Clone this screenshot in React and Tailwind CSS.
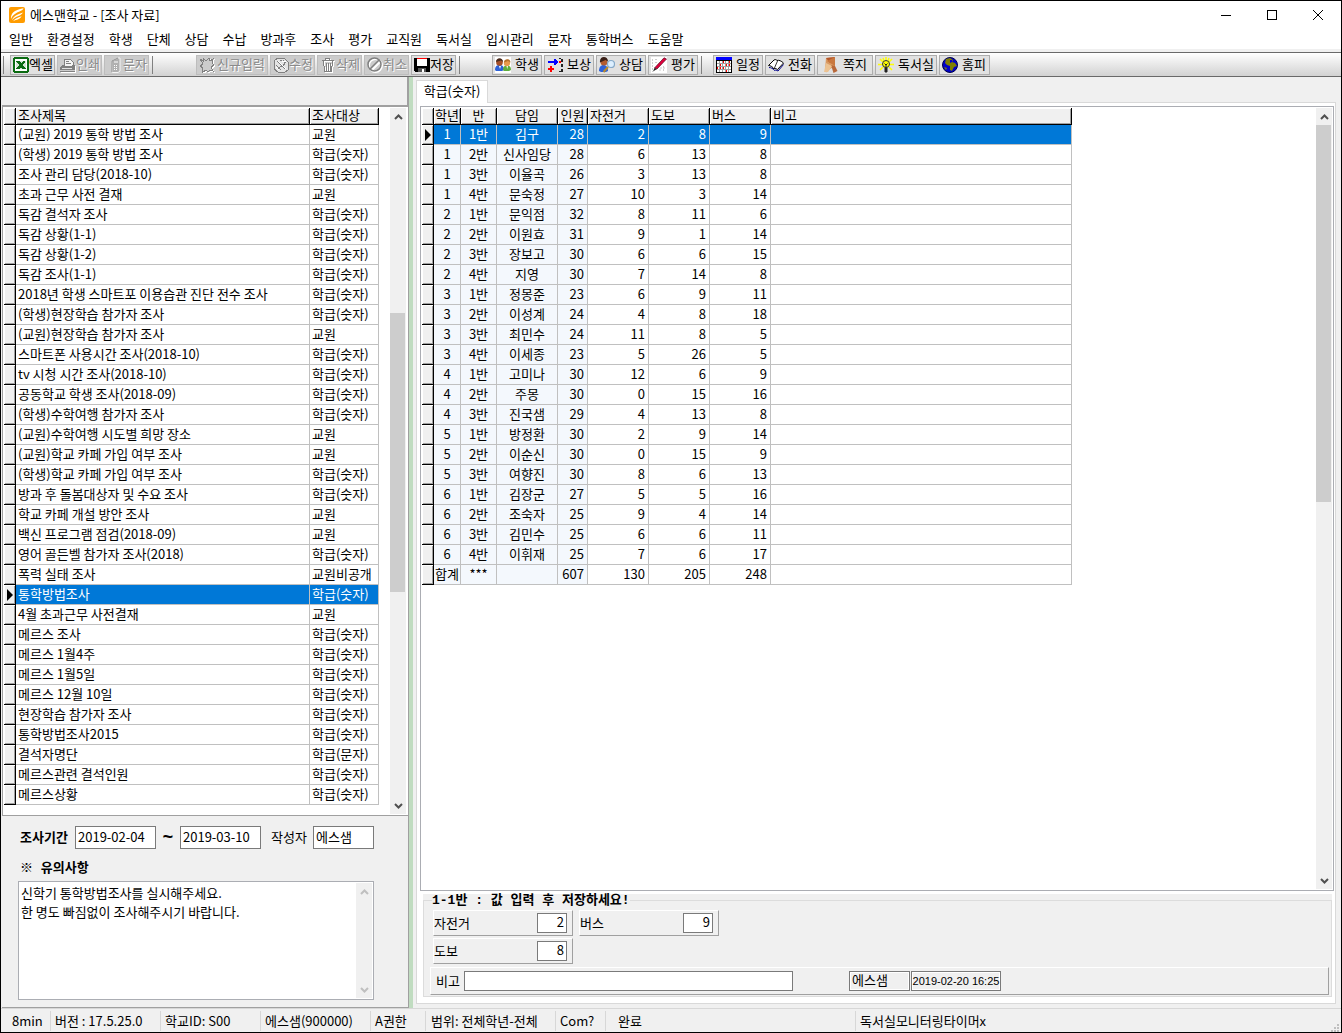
import { useState } from 'react';

const MENUS = ['일반', '환경설정', '학생', '단체', '상담', '수납', '방과후', '조사', '평가', '교직원', '독서실', '입시관리', '문자', '통학버스', '도움말'];

const NUM = '학급(숫자)';
const SURVEYS = [
  ['(교원) 2019 통학 방법 조사', '교원'],
  ['(학생) 2019 통학 방법 조사', NUM],
  ['조사 관리 담당(2018-10)', NUM],
  ['초과 근무 사전 결재', '교원'],
  ['독감 결석자 조사', NUM],
  ['독감 상황(1-1)', NUM],
  ['독감 상황(1-2)', NUM],
  ['독감 조사(1-1)', NUM],
  ['2018년 학생 스마트포 이용습관 진단 전수 조사', NUM],
  ['(학생)현장학습 참가자 조사', NUM],
  ['(교원)현장학습 참가자 조사', '교원'],
  ['스마트폰 사용시간 조사(2018-10)', NUM],
  ['tv 시청 시간 조사(2018-10)', NUM],
  ['공동학교 학생 조사(2018-09)', NUM],
  ['(학생)수학여행 참가자 조사', NUM],
  ['(교원)수학여행 시도별 희망 장소', '교원'],
  ['(교원)학교 카페 가입 여부 조사', '교원'],
  ['(학생)학교 카페 가입 여부 조사', NUM],
  ['방과 후 돌봄대상자 및 수요 조사', NUM],
  ['학교 카페 개설 방안 조사', '교원'],
  ['백신 프로그램 점검(2018-09)', '교원'],
  ['영어 골든벨 참가자 조사(2018)', NUM],
  ['폭력 실태 조사', '교원비공개'],
  ['통학방법조사', NUM],
  ['4월 초과근무 사전결재', '교원'],
  ['메르스 조사', NUM],
  ['메르스 1월4주', NUM],
  ['메르스 1월5일', NUM],
  ['메르스 12월 10일', NUM],
  ['현장학습 참가자 조사', NUM],
  ['통학방법조사2015', NUM],
  ['결석자명단', '학급(문자)'],
  ['메르스관련 결석인원', NUM],
  ['메르스상황', NUM],
];

const CLASSES = [
  ['1', '1반', '김구', 28, 2, 8, 9],
  ['1', '2반', '신사임당', 28, 6, 13, 8],
  ['1', '3반', '이율곡', 26, 3, 13, 8],
  ['1', '4반', '문숙정', 27, 10, 3, 14],
  ['2', '1반', '문익점', 32, 8, 11, 6],
  ['2', '2반', '이원효', 31, 9, 1, 14],
  ['2', '3반', '장보고', 30, 6, 6, 15],
  ['2', '4반', '지영', 30, 7, 14, 8],
  ['3', '1반', '정몽준', 23, 6, 9, 11],
  ['3', '2반', '이성계', 24, 4, 8, 18],
  ['3', '3반', '최민수', 24, 11, 8, 5],
  ['3', '4반', '이세종', 23, 5, 26, 5],
  ['4', '1반', '고미나', 30, 12, 6, 9],
  ['4', '2반', '주몽', 30, 0, 15, 16],
  ['4', '3반', '진국샘', 29, 4, 13, 8],
  ['5', '1반', '방정환', 30, 2, 9, 14],
  ['5', '2반', '이순신', 30, 0, 15, 9],
  ['5', '3반', '여향진', 30, 8, 6, 13],
  ['6', '1반', '김장군', 27, 5, 5, 16],
  ['6', '2반', '조숙자', 25, 9, 4, 14],
  ['6', '3반', '김민수', 25, 6, 6, 11],
  ['6', '4반', '이휘재', 25, 7, 6, 17],
  ['합계', '***', '', 607, 130, 205, 248],
];

const CLASS_COLS = [
  { label: '학년', width: 27, align: 'center' },
  { label: '반', width: 36, align: 'center' },
  { label: '담임', width: 61, align: 'center' },
  { label: '인원', width: 30, align: 'right' },
  { label: '자전거', width: 61, align: 'right' },
  { label: '도보', width: 61, align: 'right' },
  { label: '버스', width: 61, align: 'right' },
  { label: '비고', width: 301, align: 'left' },
];

/* ---------- icons ---------- */

function Icon({ children, crisp }) {
  return (
    <svg viewBox="0 0 16 16" className="h-4 w-4 shrink-0" shapeRendering={crisp ? 'crispEdges' : 'auto'} aria-hidden="true">
      {children}
    </svg>
  );
}

const AppLogo = () => (
  <Icon>
    <rect width="16" height="16" rx="2" fill="#ff9c00" />
    <path d="M2 12C1.600 7 4.500 3 14.500 1.300C13.500 4 10 4.300 7 6.300C4.300 8 3 9.500 2 12Z" fill="#fff" />
    <path d="M3 13.200C4.500 9 8 7.500 14 5.400C12.600 8 10 8.500 7.500 9.700C5.500 10.700 4.400 11.700 3 13.200Z" fill="#fff" />
    <path d="M4 14.300C6 11.600 8.500 10.800 12.600 9.300C11 12.400 8 12.400 4 14.300Z" fill="#fff" />
  </Icon>
);

const ExcelIcon = () => (
  <Icon crisp>
    <path d="M1 0h14v1h1v14h-1v1H1v-1H0V1h1Z" fill="#0b6b12" />
    <rect x="2" y="2" width="12" height="12" fill="#fff" />
    <rect x="3" y="4" width="10" height="8" fill="#d5e4d5" />
    <path d="M3 4h4l1 2 2-2h2v1l-2 3 3 4H9L8 10l-2 2H3l3-4Z" fill="#0b6b12" />
  </Icon>
);

const PrintIcon = () => (
  <Icon crisp>
    <path d="M4 9V2h6l3 3v4Z" fill="#f4f4f4" stroke="#808080" />
    <path d="M6 4.500h3M6 6.500h5" stroke="#808080" />
    <path d="M2 8h2v2h8V8h3v5H0v-3Z" fill="#808080" />
    <path d="M1 15.500h15M15.500 9v6" stroke="#fff" />
    <path d="M0 14h15" stroke="#808080" />
    <path d="M2 11.500h10" stroke="#e0e0e0" />
  </Icon>
);

const PhoneIcon = () => (
  <Icon>
    <path d="M5 4l6-3h2v13l-2 1.500H5.500Z" fill="#b0b0b0" stroke="#f4f4f4" />
    <path d="M5 4l6-3M5 4v11" stroke="#8a8a8a" fill="none" />
    <path d="M7 5h4M7 8.500h1M9 8.500h1M7 10.500h1M9 10.500h1M7 12.500h1M9 12.500h1" stroke="#fff" />
  </Icon>
);

const NewIcon = () => (
  <Icon crisp>
    <path d="M1 2l3 2V1l3 3 3-3 1 3 3-2-1 4 2 2-3 2 2 4-3-1-2 2-2-2-4 3 1-5-3-2 3-2Z" fill="none" stroke="#fff" transform="translate(1 1)" />
    <path d="M1 2l3 2V1l3 3 3-3 1 3 3-2-1 4 2 2-3 2 2 4-3-1-2 2-2-2-4 3 1-5-3-2 3-2Z" fill="#ccc" stroke="#808080" />
  </Icon>
);

const EditIcon = () => (
  <Icon crisp>
    <path d="M1 4l4-3h6l4 4v8l-3 2H5l-4-3Z" fill="#e4e4e4" stroke="#808080" />
    <path d="M4 4l8 8M7 3l6 3M3 8l5 5M10 3l2 4M4 12l8-5" stroke="#808080" />
    <path d="M5 4l8 8M3 10l3 3M9 4l4 1" stroke="#fff" />
  </Icon>
);

const TrashIcon = () => (
  <Icon crisp>
    <path d="M3 4.500h12M6.500 4V2.500h4V4M4.500 5l1 10.500h7l1-10.500M7.500 7v7M9.500 7v7M11.500 7v7" fill="none" stroke="#fff" />
    <path d="M2 3.500h12M5.500 3V1.500h4V3M3.500 4l1 10.500h7l1-10.500M6.500 6v8M8.500 6v8M10.500 6v8" fill="none" stroke="#808080" />
  </Icon>
);

const CancelIcon = () => (
  <Icon>
    <circle cx="8.500" cy="8.500" r="6.500" fill="none" stroke="#fff" strokeWidth="2" />
    <path d="M4.500 13.500l9-9" stroke="#fff" strokeWidth="2" />
    <circle cx="7.500" cy="7.500" r="6.500" fill="none" stroke="#808080" strokeWidth="1.500" />
    <path d="M3 12l9-9" stroke="#808080" strokeWidth="1.500" />
  </Icon>
);

const SaveIcon = () => (
  <Icon crisp>
    <path d="M0 1h16v14H1l-1-1Z" fill="#000" />
    <rect x="3" y="1" width="10" height="8" fill="#fff" />
    <rect x="3" y="1" width="10" height="1" fill="#f00" />
    <rect x="4" y="11" width="8" height="4" fill="#555" />
    <rect x="8" y="12" width="2" height="3" fill="#fff" />
  </Icon>
);

const StudentIcon = () => (
  <Icon>
    <rect width="16" height="16" fill="#fff" />
    <path d="M0 13c0-4 2-5 4.500-5S9 9 9 13L7 14H1Z" fill="#2d62d8" />
    <path d="M8 13c0-3.500 1.500-4.500 4-4.500s4 1 4 4.500l-2 1H9Z" fill="#5fae3d" />
    <circle cx="4.500" cy="5.500" r="3.300" fill="#a6512a" />
    <circle cx="12" cy="6" r="3.200" fill="#e89a4c" />
    <path d="M1 5c0-5 7-5 7 0L6 3.500Z" fill="#4a2a1c" />
    <path d="M9 5.500c0-4.500 6.500-4.500 6.500 0L13 4Z" fill="#b5702a" />
    <path d="M4 9l1 3 1-3ZM11.500 9l.7 3 .8-3Z" fill="#fff" />
  </Icon>
);

const MeritIcon = () => (
  <Icon crisp>
    <path d="M1 4h6V2h1l3 3-3 3H7V6H1Z" fill="#00f" />
    <path d="M3 9h2v2h2v2H5v2H3v-2H1v-2h2Z" fill="#f00" />
    <path d="M12 1h2v1h-2zM14 2h2v3h-2zM14 7h2v3h-2zM14 12h2v3h-2zM12 14h2v1h-2z" fill="#222" />
    <rect x="12" y="4" width="2" height="2" fill="#f00" />
  </Icon>
);

const CounselIcon = () => (
  <Icon>
    <path d="M0 14c0-4 2-6 4.500-6S9 10 9 14l-2 1H2Z" fill="#2d62d8" />
    <circle cx="5" cy="5" r="3.500" fill="#b35c30" />
    <path d="M1 5.500c-1-7 8-7 8-1L6.500 3Z" fill="#3a2018" />
    <path d="M9 10l-4.500 5" stroke="#b98a2c" strokeWidth="2" />
    <circle cx="12" cy="7" r="3.500" fill="#dcefff" stroke="#86a9c8" strokeWidth="1.200" />
  </Icon>
);

const GradeIcon = () => (
  <Icon>
    <rect width="16" height="16" fill="#fff" />
    <path d="M1.500 2v13M4 2.500h3M4 5.500h2M9 11h5M12.500 9v6M8 13h3" stroke="#ccc" strokeDasharray="2 1" />
    <path d="M3.500 11L13 .8 15.500 2 6 12Z" fill="#e0003c" stroke="#5a0a22" strokeWidth=".7" />
    <path d="M3.500 11L2 14.500 6 12Z" fill="#222" />
  </Icon>
);

const CalendarIcon = () => (
  <Icon crisp>
    <rect width="16" height="16" fill="#000" />
    <rect x="1" y="4" width="14" height="11" fill="#fff" />
    <rect y="0" width="16" height="3" fill="#00f" />
    <path d="M1 6.500h14M1 9.500h14M1 12.500h14M3.500 4v11M6.500 4v11M9.500 4v11M12.500 4v11" stroke="#a0a0a0" />
    <path d="M4 8h1M10 8h1M4 11h1M7 11h1M7 5h1M13 5h1M10 14h1M13 8h1M1 11h1" stroke="#f00" strokeWidth="2" />
  </Icon>
);

const BookIcon = () => (
  <Icon>
    <path d="M0.500 8.500L6 3c1.500-1 2.500 0 3 .5 1.500-.8 4.500.5 6.500 2.500L9.500 12.500c-2-1.500-3-1-3.500-.5-1-2-3.500-3.500-5.500-3.500Z" fill="#fff" stroke="#000" />
    <path d="M6 12L9.500 4" stroke="#000" strokeWidth=".8" />
    <path d="M1 10.500c2 0 4 1 5.500 3 1-.7 2-.3 3.500.5l5.500-6.500" stroke="#00008b" fill="none" />
  </Icon>
);

const NoteIcon = () => (
  <Icon>
    <path d="M3 1l9-1v9l-5 3-4 3.500-1-3Z" fill="#d99a63" />
    <path d="M3 1l9-1L7 6Z" fill="#b5562b" />
    <path d="M12 0v9L4 4Z" fill="#c9783f" />
    <path d="M8 8l4 1 2.500 5-4 2Z" fill="#b8683a" />
    <path d="M1 15l2-9 6 3-4 6Z" fill="#ecc291" />
  </Icon>
);

const BulbIcon = () => (
  <Icon>
    <path d="M8 0v3M2 2l3 3M14 2l-3 3M0 7.500h4M12 7.500h4M2 13l3-3M14 13l-3-3M5 1l1 3M11 1l-1 3" stroke="#ff0" strokeWidth="1.500" />
    <circle cx="8" cy="7" r="3.500" fill="#ff0" stroke="#333" />
    <path d="M6.500 6.500L8 8l1.500-1.500M8 8v4" stroke="#222" fill="none" />
    <path d="M6.500 10.500h3v4L8 16l-1.500-1.500Z" fill="#222" />
  </Icon>
);

const GlobeIcon = () => (
  <Icon>
    <circle cx="8" cy="8" r="7.500" fill="#0000c8" stroke="#00004a" />
    <path d="M4 2l4-1 3 2-1 2 3 1 2 3-3 1-2 4-2-1V9L5 8 3 6Z" fill="#7f7f00" />
    <path d="M8 3h2v2L8 6Z" fill="#0000c8" />
    <path d="M2 10l3 1-1 2Z" fill="#7f7f00" />
  </Icon>
);

/* ---------- window parts ---------- */

function TitleBar() {
  return (
    <header className="flex h-7 items-center bg-white pl-2">
      <AppLogo />
      <h1 className="ml-[5px] flex-1 text-[13px] leading-5">에스맨학교 - [조사 자료]</h1>
      <button type="button" aria-label="최소화" className="grid h-7 w-[46px] place-items-center">
        <svg viewBox="0 0 10 10" className="h-[10px] w-[10px]"><path d="M0 5.500h10" stroke="#000" /></svg>
      </button>
      <button type="button" aria-label="최대화" className="grid h-7 w-[46px] place-items-center">
        <svg viewBox="0 0 10 10" className="h-[10px] w-[10px]"><rect x=".5" y=".5" width="9" height="9" fill="none" stroke="#000" /></svg>
      </button>
      <button type="button" aria-label="닫기" className="grid h-7 w-[46px] place-items-center">
        <svg viewBox="0 0 10 10" className="h-[10px] w-[10px]"><path d="M0 0l10 10M10 0L0 10" stroke="#000" /></svg>
      </button>
    </header>
  );
}

function MenuBar() {
  return (
    <nav className="flex h-5 items-center gap-[14px] bg-white pl-2 whitespace-nowrap">
      {MENUS.map(m => (
        <button key={m} type="button" className="leading-5">{m}</button>
      ))}
    </nav>
  );
}

function ToolButton({ icon, label, className, disabled }) {
  return (
    <button
      type="button"
      disabled={disabled}
      className={`flex h-5 shrink-0 items-center border pl-[2px] whitespace-nowrap ${disabled
        ? 'border-[#bdbdbd] bg-[#cccccc] text-[#8a8a8a] [text-shadow:1px_1px_0_#fff]'
        : 'border-[#adadad] bg-[#e1e1e1]'} ${className}`}
    >
      {icon}
      <span className="pb-[2px]">{label}</span>
    </button>
  );
}

const Divider = ({ className }) => <span className={`h-[18px] w-px shrink-0 bg-[#808080] ${className}`} />;

function Toolbar() {
  return (
    <div className="flex h-[25px] items-center gap-[2px] border-y border-[#696969] bg-linear-to-b from-white to-[#d2d2d2] pl-[2px] leading-4">
      <Divider className="mr-[4px]" />
      <ToolButton icon={<ExcelIcon />} label="엑셀" className="w-[45px]" />
      <ToolButton icon={<PrintIcon />} label="인쇄" className="w-[45px]" disabled />
      <ToolButton icon={<PhoneIcon />} label="문자" className="w-[45px]" disabled />
      <Divider className="mr-[41px] ml-[1px]" />
      <ToolButton icon={<NewIcon />} label="신규입력" className="w-[72px] gap-[2px]" disabled />
      <ToolButton icon={<EditIcon />} label="수정" className="w-[45px]" disabled />
      <ToolButton icon={<TrashIcon />} label="삭제" className="w-[45px]" disabled />
      <ToolButton icon={<CancelIcon />} label="취소" className="w-[45px]" disabled />
      <ToolButton icon={<SaveIcon />} label="저장" className="w-[45px]" />
      <Divider className="mr-[30px] ml-[1px]" />
      <ToolButton icon={<StudentIcon />} label="학생" className="w-[50px] gap-1" />
      <ToolButton icon={<MeritIcon />} label="보상" className="w-[50px] gap-1" />
      <ToolButton icon={<CounselIcon />} label="상담" className="w-[50px] gap-1" />
      <ToolButton icon={<GradeIcon />} label="평가" className="w-[50px] gap-1" />
      <Divider className="mr-[9px] ml-[1px]" />
      <ToolButton icon={<CalendarIcon />} label="일정" className="w-[50px] gap-1" />
      <ToolButton icon={<BookIcon />} label="전화" className="w-[50px] gap-1" />
      <ToolButton icon={<NoteIcon />} label="쪽지" className="w-[56px] gap-1 pl-[5px]" />
      <ToolButton icon={<BulbIcon />} label="독서실" className="w-[62px] gap-1" />
      <ToolButton icon={<GlobeIcon />} label="홈피" className="w-[51px] gap-1" />
    </div>
  );
}

function ScrollBar({ faint, before, thumb, after }) {
  const color = faint ? '#bfbfbf' : '#505050';
  return (
    <div className="flex w-4 shrink-0 flex-col bg-[#f0f0f0]">
      <button type="button" aria-label="위로" className="grid h-[17px] w-4 shrink-0 place-items-center">
        <svg viewBox="0 0 9 6" className="h-[6px] w-[9px]"><path d="M1 5l3.500-3.500L8 5" fill="none" stroke={color} strokeWidth="2" /></svg>
      </button>
      <div className="flex flex-1 flex-col">
        <div style={{ flexGrow: before }} />
        <div className="mr-px bg-[#cdcdcd]" style={{ flexGrow: thumb }} />
        <div style={{ flexGrow: after }} />
      </div>
      <button type="button" aria-label="아래로" className="grid h-[17px] w-4 shrink-0 place-items-center">
        <svg viewBox="0 0 9 6" className="h-[6px] w-[9px]"><path d="M1 1l3.500 3.500L8 1" fill="none" stroke={color} strokeWidth="2" /></svg>
      </button>
    </div>
  );
}

function HeadCell({ children, center }) {
  return (
    <th className={`h-[17px] border-r border-b border-black bg-[#f0f0f0] pt-0 pb-[2px] leading-[14px] font-normal whitespace-nowrap shadow-[inset_1px_1px_0_#fff,inset_-1px_-1px_0_#a0a0a0] ${center ? 'px-0 text-center' : 'px-[2px] text-left'}`}>
      {children}
    </th>
  );
}

function Indicator({ active }) {
  return (
    <td className="h-5 border-r border-b border-black bg-[#f0f0f0] p-0 pl-[3px] shadow-[inset_1px_1px_0_#fff,inset_-1px_-1px_0_#a0a0a0]">
      {active && (
        <svg viewBox="0 0 6 12" className="h-3 w-[6px]"><path d="M0 0l6 6-6 6Z" fill="#000" /></svg>
      )}
    </td>
  );
}

function SurveyTable() {
  const [selected, setSelected] = useState(23);
  return (
    <table className="w-[375px] table-fixed border-separate border-spacing-0">
      <colgroup>
        <col className="w-[12px]" />
        <col className="w-[294px]" />
        <col className="w-[69px]" />
      </colgroup>
      <thead>
        <tr>
          <HeadCell />
          <HeadCell>조사제목</HeadCell>
          <HeadCell>조사대상</HeadCell>
        </tr>
      </thead>
      <tbody>
        {SURVEYS.map(([title, target], i) => (
          <tr key={title} onClick={() => setSelected(i)} className={i === selected ? 'bg-[#0078d7] text-white' : ''}>
            <Indicator active={i === selected} />
            <td className="h-5 border-r border-b border-[#c0c0c0] px-[2px] pt-0 pb-[2px] leading-[17px] whitespace-nowrap">{title}</td>
            <td className="h-5 border-r border-b border-[#c0c0c0] px-[2px] pt-0 pb-[2px] leading-[17px] whitespace-nowrap">{target}</td>
          </tr>
        ))}
      </tbody>
    </table>
  );
}

function ClassTable() {
  const [selected, setSelected] = useState(0);
  return (
    <table className="w-[650px] table-fixed border-separate border-spacing-0">
      <colgroup>
        <col className="w-[12px]" />
        {CLASS_COLS.map(c => <col key={c.label} style={{ width: c.width }} />)}
      </colgroup>
      <thead>
        <tr>
          <HeadCell />
          {CLASS_COLS.map((c, i) => <HeadCell key={c.label} center={i < 4}>{c.label}</HeadCell>)}
        </tr>
      </thead>
      <tbody>
        {CLASSES.map((row, r) => (
          <tr key={r} onClick={() => setSelected(r)} className={r === selected ? 'bg-[#0078d7] text-white' : ''}>
            <Indicator active={r === selected} />
            {CLASS_COLS.map((c, i) => (
              <td
                key={c.label}
                className={`h-5 border-r border-b border-[#c0c0c0] pt-0 pb-[2px] leading-[17px] whitespace-nowrap ${i < 4 && r !== selected ? 'bg-[#f4f8fd]' : ''} ${c.align === 'right' ? 'pr-[3px] pl-0 text-right' : 'px-0 text-center'}`}
              >
                {row[i]}
              </td>
            ))}
          </tr>
        ))}
      </tbody>
    </table>
  );
}

function SurveyDetail() {
  return (
    <section className="border-r border-b border-[#a0a0a0] px-4 pt-[10px] pb-[7px]">
      <div className="flex h-[23px] items-center pl-[2px]">
        <label htmlFor="from" className="w-[55px] pb-[2px] font-bold">조사기간</label>
        <input id="from" defaultValue="2019-02-04" className="h-[23px] w-[81px] border border-[#7a7a7a] bg-white px-[2px] pb-[3px]" />
        <span className="w-6 text-center font-['Liberation_Mono',monospace] text-[18px] font-bold">~</span>
        <input aria-label="종료일" defaultValue="2019-03-10" className="h-[23px] w-[81px] border border-[#7a7a7a] bg-white px-[2px] pb-[3px]" />
        <label htmlFor="writer" className="ml-[10px] w-[42px] pb-[2px]">작성자</label>
        <input id="writer" defaultValue="에스샘" className="h-[23px] w-[61px] border border-[#7a7a7a] bg-white px-[2px] pb-[3px]" />
      </div>
      <label htmlFor="notice" className="mt-[10px] mb-[2px] block pl-[2px] font-['Liberation_Mono','Noto_Sans_CJK_KR',monospace] leading-5 font-bold">※ 유의사항</label>
      <div className="flex h-[119px] w-[356px] border border-[#abadb3] bg-white p-px">
        <textarea
          id="notice"
          className="flex-1 resize-none overflow-hidden bg-white pl-px leading-[19px]"
          defaultValue={'신학기 통학방법조사를 실시해주세요.\n한 명도 빠짐없이 조사해주시기 바랍니다.'}
        />
        <ScrollBar faint before={1} thumb={0} after={0} />
      </div>
    </section>
  );
}

function ValueField({ label, value }) {
  return (
    <label className="flex h-[26px] w-[140px] items-center justify-between border border-t-white border-r-[#a0a0a0] border-b-[#a0a0a0] border-l-white pr-[5px]">
      {label}
      <input defaultValue={value} className="h-5 w-[30px] border border-[#7a7a7a] bg-white px-[2px] pb-[2px] text-right" />
    </label>
  );
}

function EntryForm() {
  return (
    <div className="mt-[3px] mr-[3px] ml-[6px] bg-[#f0f0f0]">
      <fieldset className="border border-[#dcdcdc] pr-[2px] pb-px pl-[6px]">
        <legend className="ml-[2px] h-[13px] bg-[#f0f0f0] font-['Liberation_Mono','Noto_Sans_CJK_KR',monospace] leading-[13px] font-bold whitespace-nowrap">
          1-1반 : 값 입력 후 저장하세요!
        </legend>
        <div className="mt-[3px] ml-[3px] grid grid-cols-[140px_140px] gap-x-[6px] gap-y-[2px]">
          <ValueField label="자전거" value="2" />
          <ValueField label="버스" value="9" />
          <ValueField label="도보" value="8" />
        </div>
        <div className="mt-[3px] flex h-7 items-center border border-t-white border-r-[#a0a0a0] border-b-[#a0a0a0] border-l-white pl-[5px]">
          <label htmlFor="remark" className="w-7">비고</label>
          <input id="remark" className="h-5 w-[329px] border border-[#7a7a7a] bg-white px-[2px]" />
          <input aria-label="입력자" readOnly defaultValue="에스샘" className="ml-[56px] h-5 w-[61px] border border-[#7a7a7a] bg-[#f0f0f0] px-[2px] pb-[2px] shadow-[inset_0_0_0_1px_#fff]" />
          <input aria-label="입력시각" readOnly defaultValue="2019-02-20 16:25" className="ml-px h-5 w-[90px] border border-[#7a7a7a] bg-[#f0f0f0] px-0 text-center font-['Liberation_Sans',sans-serif] text-[11px] shadow-[inset_0_0_0_1px_#fff]" />
        </div>
      </fieldset>
    </div>
  );
}

function StatusBar() {
  return (
    <footer className="flex h-6 items-center border-t border-[#d7d7d7] bg-[#f0f0f0] whitespace-nowrap">
      <span className="w-[50px] border-r border-[#d7d7d7] pl-[11px]">8min</span>
      <span className="w-[110px] border-r border-[#d7d7d7] pl-1">버전 : 17.5.25.0</span>
      <span className="w-[100px] border-r border-[#d7d7d7] pl-1">학교ID: S00</span>
      <span className="w-[110px] border-r border-[#d7d7d7] pl-1">에스샘(900000)</span>
      <span className="w-[55px] border-r border-[#d7d7d7] pl-1">A권한</span>
      <span className="w-[130px] border-r border-[#d7d7d7] pl-[5px]">범위: 전체학년-전체</span>
      <span className="w-[50px] border-r border-[#d7d7d7] pl-1">Com?</span>
      <span className="w-[250px] border-r border-[#d7d7d7] pl-3">완료</span>
      <span className="flex-1 pl-1">독서실모니터링타이머x</span>
      <svg viewBox="0 0 8 8" className="mr-[2px] h-2 w-2 self-end" aria-hidden="true">
        <path d="M6 0h2v2H6zM3 3h2v2H3zM6 3h2v2H6zM0 6h2v2H0zM3 6h2v2H3zM6 6h2v2H6z" fill="#bfbfbf" />
      </svg>
    </footer>
  );
}

export default function App() {
  return (
    <div className="flex min-h-screen flex-col border border-black bg-[#f0f0f0] font-['Noto_Sans_CJK_KR',sans-serif] text-[13px] leading-5 text-black">
      <TitleBar />
      <MenuBar />
      <div className="h-[3px] bg-[#f0f0f0]" />
      <Toolbar />

      <main className="flex flex-1">
        <aside className="flex w-[408px] shrink-0 flex-col pl-px">
          <div className="h-[29px] border-r-2 border-b border-[#a0a0a0]" />
          <div className="flex flex-1 border border-[#a0a0a0] bg-white p-px pr-[2px]">
            <div className="flex-1">
              <SurveyTable />
            </div>
            <ScrollBar before={188} thumb={279} after={205} />
          </div>
          <SurveyDetail />
        </aside>
        <div className="w-1 shrink-0 bg-[#c0dcc0]" />

        <section className="flex flex-1 flex-col pt-[3px] pr-[5px] pb-1 pl-[3px]">
          <button type="button" className="relative z-10 -mb-px h-[23px] w-[72px] border border-b-0 border-[#d9d9d9] bg-white pb-[3px]">학급(숫자)</button>
          <div className="flex flex-1 flex-col border border-[#d9d9d9] bg-white pt-[3px] pb-[6px]">
            <div className="mr-px ml-[3px] flex flex-1 border border-[#abadb3] p-px">
              <div className="flex-1">
                <ClassTable />
              </div>
              <ScrollBar before={0} thumb={382} after={374} />
            </div>
            <EntryForm />
          </div>
        </section>
      </main>

      <StatusBar />
    </div>
  );
}
